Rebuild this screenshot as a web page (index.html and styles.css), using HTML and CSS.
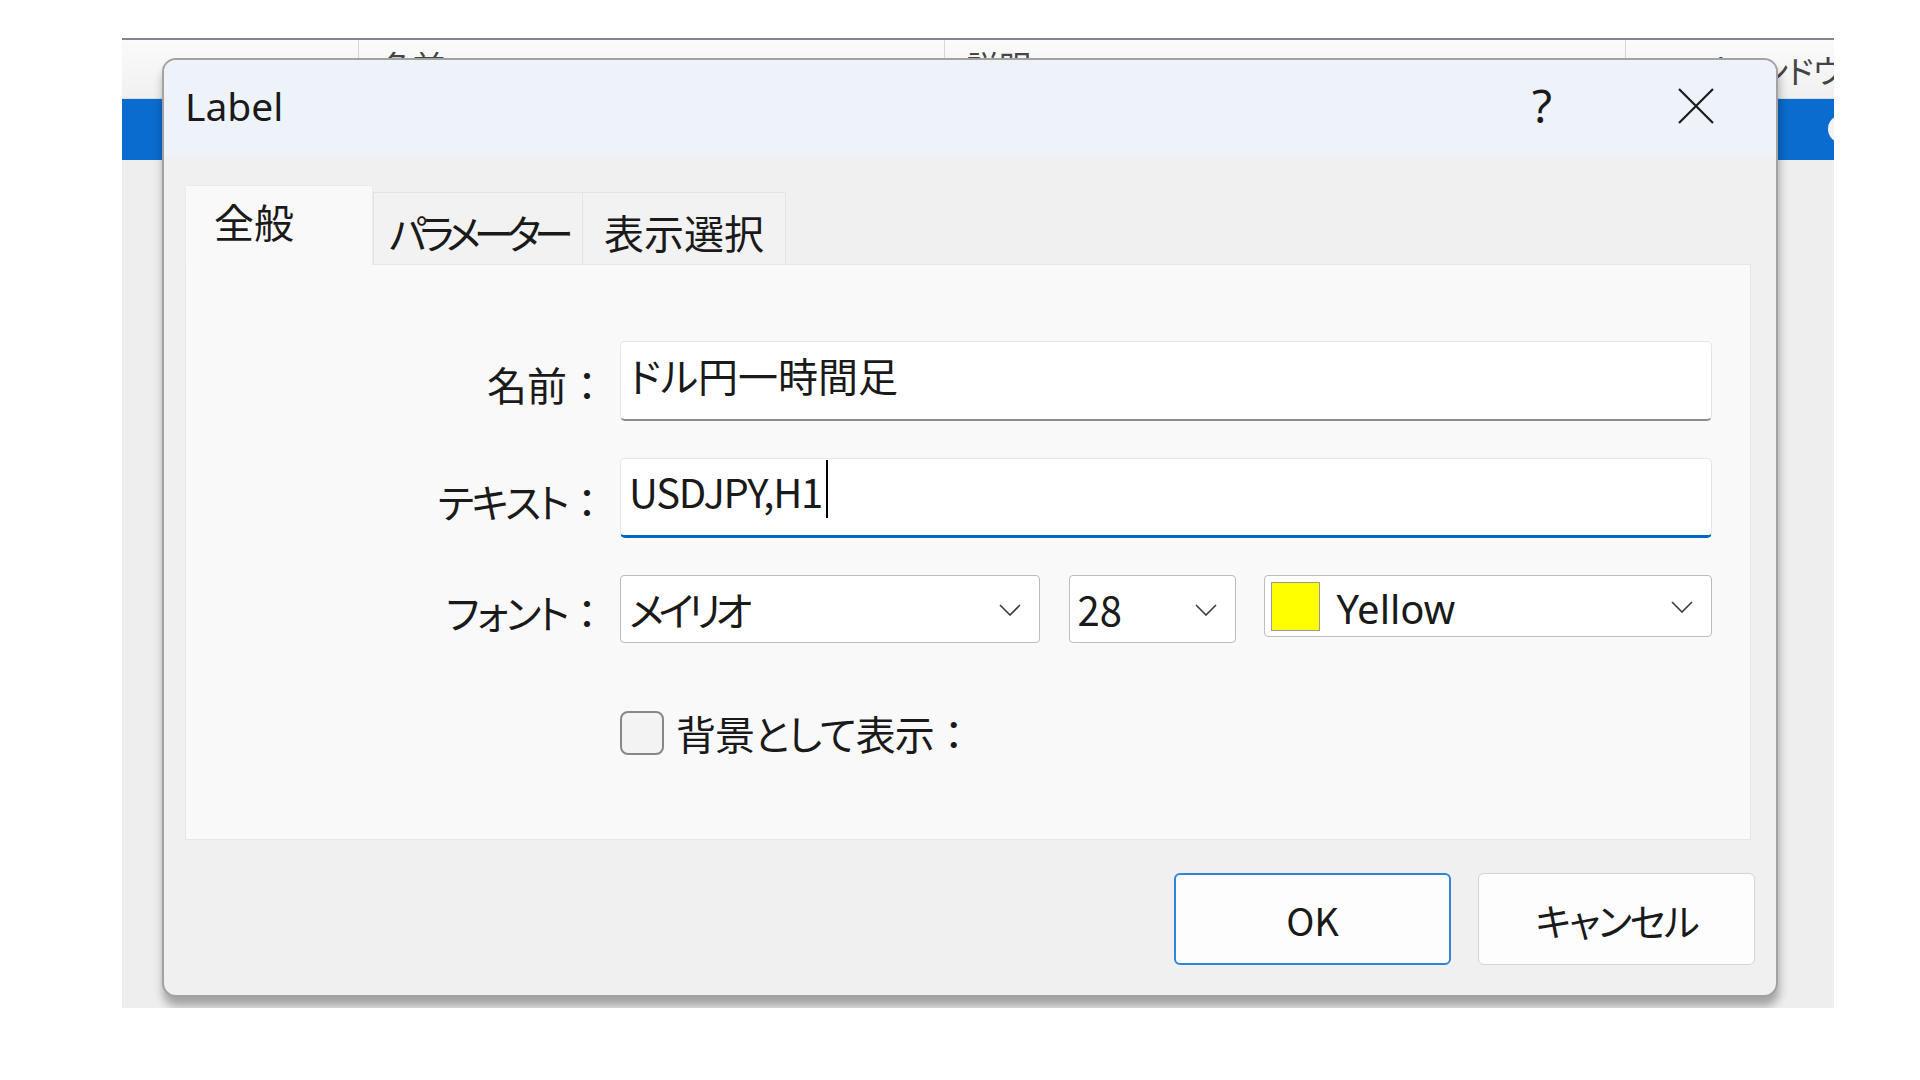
FILE: index.html
```html
<!DOCTYPE html>
<html>
<head>
    <meta charset="utf-8">
    <meta name="viewport" content="width=device-width, initial-scale=1">
    <title>Label</title>
    <link rel="stylesheet" href="styles.css">
</head>
<body>
    <div class="app">
        <div class="app-head">
            <div class="col"></div>
            <div class="col">名前</div>
            <div class="col">説明</div>
            <div class="col">ウィンドウ</div>
        </div>
        <div class="app-row"><span class="pill"></span></div>

        <div class="dialog">
            <div class="title-bar">
                <span class="title">Label</span>
                <span class="help">?</span>
                <span class="close">
                    <svg width="36" height="36" viewBox="0 0 36 36"><path d="M1 1 L35 35 M35 1 L1 35" stroke="#1c1c1c" stroke-width="2.2" fill="none"/></svg>
                </span>
            </div>

            <div class="dialog-body">
                <div class="tabs">
                    <div class="tab active">全般</div>
                    <div class="tab params">パラメーター</div>
                    <div class="tab view">表示選択</div>
                </div>

                <div class="panel">
                    <div class="form">
                        <label class="lbl">名前<span class="colon">：</span></label>
                        <div class="field">ドル円一時間足</div>

                        <label class="lbl"><span class="kana">テキスト</span><span class="colon">：</span></label>
                        <div class="field focused"><span class="latin">USDJPY,H1</span><span class="caret"></span></div>

                        <label class="lbl"><span class="kana">フォント</span><span class="colon">：</span></label>
                        <div class="selects">
                            <div class="select font-sel">
                                <span class="narrow">メイリオ</span>
                                <svg class="chev" width="22" height="12" viewBox="0 0 22 12"><path d="M1 1 L11 11 L21 1" stroke="#3a3a3a" stroke-width="1.6" fill="none"/></svg>
                            </div>
                            <div class="select size-sel">
                                <span>28</span>
                                <svg class="chev" width="22" height="12" viewBox="0 0 22 12"><path d="M1 1 L11 11 L21 1" stroke="#3a3a3a" stroke-width="1.6" fill="none"/></svg>
                            </div>
                            <div class="select color-sel">
                                <span class="swatch"></span>
                                <span class="color-name">Yellow</span>
                                <svg class="chev" width="22" height="12" viewBox="0 0 22 12"><path d="M1 1 L11 11 L21 1" stroke="#3a3a3a" stroke-width="1.6" fill="none"/></svg>
                            </div>
                        </div>

                        <span></span>
                        <div class="check-row">
                            <span class="checkbox"></span>
                            <span class="check-text">背景として表示<span class="colon">：</span></span>
                        </div>
                    </div>
                </div>

                <div class="buttons">
                    <button class="btn ok">OK</button>
                    <button class="btn cancel">キャンセル</button>
                </div>
            </div>
        </div>
    </div>
</body>
</html>
```

FILE: styles.css
```css
body {
    margin: 0;
    background-color: #ffffff;
    font-family: "Noto Sans CJK JP", "Noto Sans", sans-serif;
    font-feature-settings: "palt";
    color: #1a1a1a;
}

.app {
    position: relative;
    overflow: hidden;
    margin: 38px 0 0 122px;
    width: 1712px;
    height: 970px;
    background-color: #eeeeee;
    border-top: 2px solid #80868c;
    box-sizing: border-box;
}
.app-head {
    display: grid;
    grid-template-columns: 237px 586px 681px 1fr;
    height: 58px;
    background: linear-gradient(#fbfbfb, #f0f0f0);
    border-bottom: 1px solid #dcdcdc;
}
.col {
    border-right: 1px solid #d6d6d6;
    padding: 0 0 0 22px;
    font-size: 32px;
    line-height: 50px;
    color: #444444;
    white-space: nowrap;
    overflow: hidden;
}
.col:nth-child(4) {
    padding: 4px 0 0 80px;
    border-right: none;
}
.app-row {
    position: relative;
    height: 61px;
    background-color: #0a6cce;
}
.pill {
    position: absolute;
    right: -22px;
    top: 16px;
    width: 28px;
    height: 28px;
    border-radius: 50%;
    background-color: #f4f4f4;
}

.dialog {
    position: absolute;
    left: 40px;
    top: 18px;
    width: 1616px;
    height: 939px;
    box-sizing: border-box;
    border: 2px solid #a2a2a2;
    border-radius: 14px;
    background-color: #f0f0f0;
    box-shadow: 1px 9px 10px rgba(0, 0, 0, 0.32);
    overflow: hidden;
}
.title-bar {
    display: flex;
    align-items: center;
    height: 97px;
    padding-left: 21px;
    background-color: #eef3f9;
}
.title {
    flex: 1;
    font-family: "Noto Sans", sans-serif;
    font-size: 39px;
    padding-bottom: 6px;
}
.help {
    font-family: "Noto Sans", sans-serif;
    font-size: 46px;
    width: 40px;
    text-align: center;
    padding-bottom: 8px;
}
.close {
    display: flex;
    margin: 0 62px 6px 116px;
}

.dialog-body {
    padding: 28px 25px 0 21px;
}
.tabs {
    display: flex;
    align-items: flex-end;
    height: 79px;
}
.tab {
    height: 72px;
    box-sizing: border-box;
    padding-top: 10px;
    background-color: #f2f2f2;
    border: 1px solid #e4e4e4;
    border-bottom: none;
    font-size: 40px;
    white-space: nowrap;
}
.tab.active {
    position: relative;
    z-index: 1;
    height: 80px;
    margin-bottom: -1px;
    width: 188px;
    padding: 6px 0 0 28px;
    background-color: #f9f9f9;
    border-color: #ebebeb;
}
.tab.params {
    width: 210px;
    padding-left: 15px;
    letter-spacing: -7px;
}
.tab.view {
    width: 203px;
    padding-left: 21px;
    border-left: none;
}
.panel {
    height: 576px;
    box-sizing: border-box;
    background-color: #f9f9f9;
    border: 1px solid #e6e6e6;
    padding: 76px 38px 0 0;
}

.form {
    display: grid;
    grid-template-columns: 421px 1092px;
    grid-template-rows: 80px 80px 68px 112px;
    column-gap: 13px;
    row-gap: 37px;
    align-items: center;
}
.lbl {
    text-align: right;
    font-size: 40px;
    padding-top: 6px;
}
.lbl .kana {
    letter-spacing: -2.5px;
}
.colon {
    display: inline-block;
    width: 40px;
    text-align: center;
    font-feature-settings: normal;
    letter-spacing: 0;
}
.field {
    height: 80px;
    box-sizing: border-box;
    display: flex;
    align-items: center;
    padding: 0 0 12px 8px;
    background-color: #ffffff;
    border: 1px solid #e6e6e6;
    border-bottom: 2px solid #8c8c8c;
    border-radius: 5px;
    font-size: 40px;
}
.field.focused {
    border-bottom: 3px solid #0067c0;
}
.latin {
    letter-spacing: -1.2px;
}
.caret {
    display: inline-block;
    width: 2px;
    height: 58px;
    margin: 0 0 4px 4px;
    background-color: #000000;
}

.selects {
    display: flex;
    align-items: flex-start;
    height: 68px;
}
.select {
    display: flex;
    align-items: center;
    height: 68px;
    box-sizing: border-box;
    padding: 0 18px 0 8px;
    background-color: #ffffff;
    border: 1px solid #bdbdbd;
    border-radius: 4px;
    font-size: 40px;
}
.select > span {
    flex: 1;
}
.narrow {
    letter-spacing: -5.5px;
}
.font-sel {
    width: 420px;
}
.size-sel {
    width: 168px;
    margin-left: 29px;
}
.color-sel {
    width: 448px;
    height: 62px;
    margin-left: 28px;
    padding-left: 6px;
}
.swatch {
    flex: none !important;
    width: 49px;
    height: 49px;
    box-sizing: border-box;
    background-color: #ffff00;
    border: 1px solid #9a9a9a;
    margin-right: 16px;
}
.color-name {
    font-family: "Noto Sans", sans-serif;
    padding-top: 4px;
}
.chev {
    margin-top: 2px;
}

.check-row {
    display: flex;
    align-items: center;
    align-self: start;
    margin-top: 24px;
}
.checkbox {
    width: 44px;
    height: 44px;
    box-sizing: border-box;
    border: 2px solid #878787;
    border-radius: 8px;
    background-color: #f3f3f3;
    margin-right: 12px;
}
.check-text {
    font-size: 40px;
    letter-spacing: -1px;
}

.buttons {
    display: flex;
    justify-content: flex-end;
    gap: 27px;
    margin-top: 33px;
    margin-right: -4px;
}
.btn {
    width: 277px;
    height: 92px;
    background-color: #fdfdfd;
    border: 1px solid #d4d4d4;
    border-radius: 6px;
    font-family: "Noto Sans CJK JP", "Noto Sans", sans-serif;
    font-feature-settings: "palt";
    font-size: 38px;
    color: #1a1a1a;
}
.btn.ok {
    border: 2px solid #2f86d6;
}
.btn.cancel {
    letter-spacing: -2px;
}
```
